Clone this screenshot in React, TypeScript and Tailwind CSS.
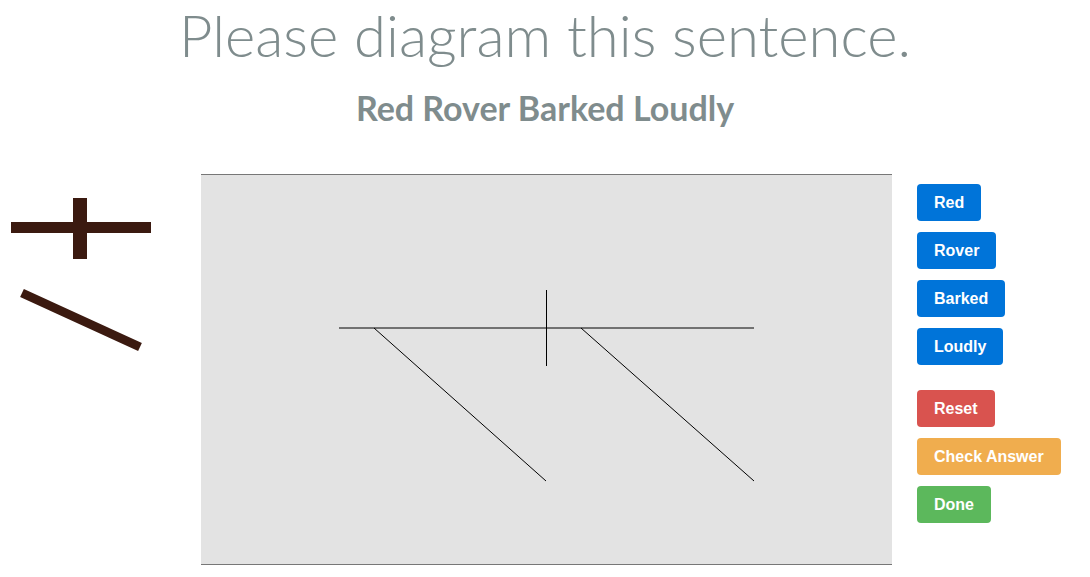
import React from "react";

function Btn({ label, color }: { label: string; color: string }) {
  return (
    <button
      className={`h-[37px] px-[17px] rounded-[4px] text-white font-bold text-[16px] leading-[18px] flex items-center self-start ${color}`}
      style={{ fontFamily: '"Liberation Sans", Arial, sans-serif' }}
    >
      {label}
    </button>
  );
}

export default function App() {
  return (
    <div className="w-[1090px] h-[577px] bg-white overflow-hidden relative">
      <h1
        className="text-center text-[#7f8c8d] font-light text-[58px] leading-[70px]"
        style={{ fontFamily: 'Lato, "Open Sans", sans-serif' }}
      >
        Please diagram this sentence.
      </h1>
      <h2
        className="text-center text-[#7f8c8d] font-bold text-[34px] leading-[42px] mt-[17px]"
        style={{ fontFamily: 'Lato, "Open Sans", sans-serif' }}
      >
        Red Rover Barked Loudly
      </h2>
      <div className="flex mt-[45px]">
        <div className="w-[201px] shrink-0">
          <svg width="201" height="200" viewBox="0 0 201 200">
            <rect x="11" y="48" width="140" height="11" fill="#3b1a10" />
            <rect x="73" y="24" width="14" height="61" fill="#3b1a10" />
            <line x1="22" y1="119" x2="140" y2="173" stroke="#3b1a10" strokeWidth="9" />
          </svg>
        </div>
        <div className="w-[691px] h-[391px] shrink-0 bg-[#e3e3e3] border-t border-b border-[#777]">
          <svg width="691" height="389" viewBox="0 0 691 389">
            <line x1="138" y1="153" x2="553" y2="153" stroke="#000" strokeWidth="1" />
            <line x1="345.5" y1="115" x2="345.5" y2="191" stroke="#000" strokeWidth="1" />
            <line x1="173" y1="153" x2="345" y2="306" stroke="#000" strokeWidth="1" />
            <line x1="380" y1="153" x2="553" y2="306" stroke="#000" strokeWidth="1" />
          </svg>
        </div>
        <div className="flex flex-col pl-[25px] pt-[10px]">
          <div className="flex flex-col gap-[11px]">
            <Btn label="Red" color="bg-[#0074d9]" />
            <Btn label="Rover" color="bg-[#0074d9]" />
            <Btn label="Barked" color="bg-[#0074d9]" />
            <Btn label="Loudly" color="bg-[#0074d9]" />
          </div>
          <div className="flex flex-col gap-[11px] mt-[25px]">
            <Btn label="Reset" color="bg-[#d9534f]" />
            <Btn label="Check Answer" color="bg-[#f0ad4e]" />
            <Btn label="Done" color="bg-[#5cb85c]" />
          </div>
        </div>
      </div>
    </div>
  );
}
